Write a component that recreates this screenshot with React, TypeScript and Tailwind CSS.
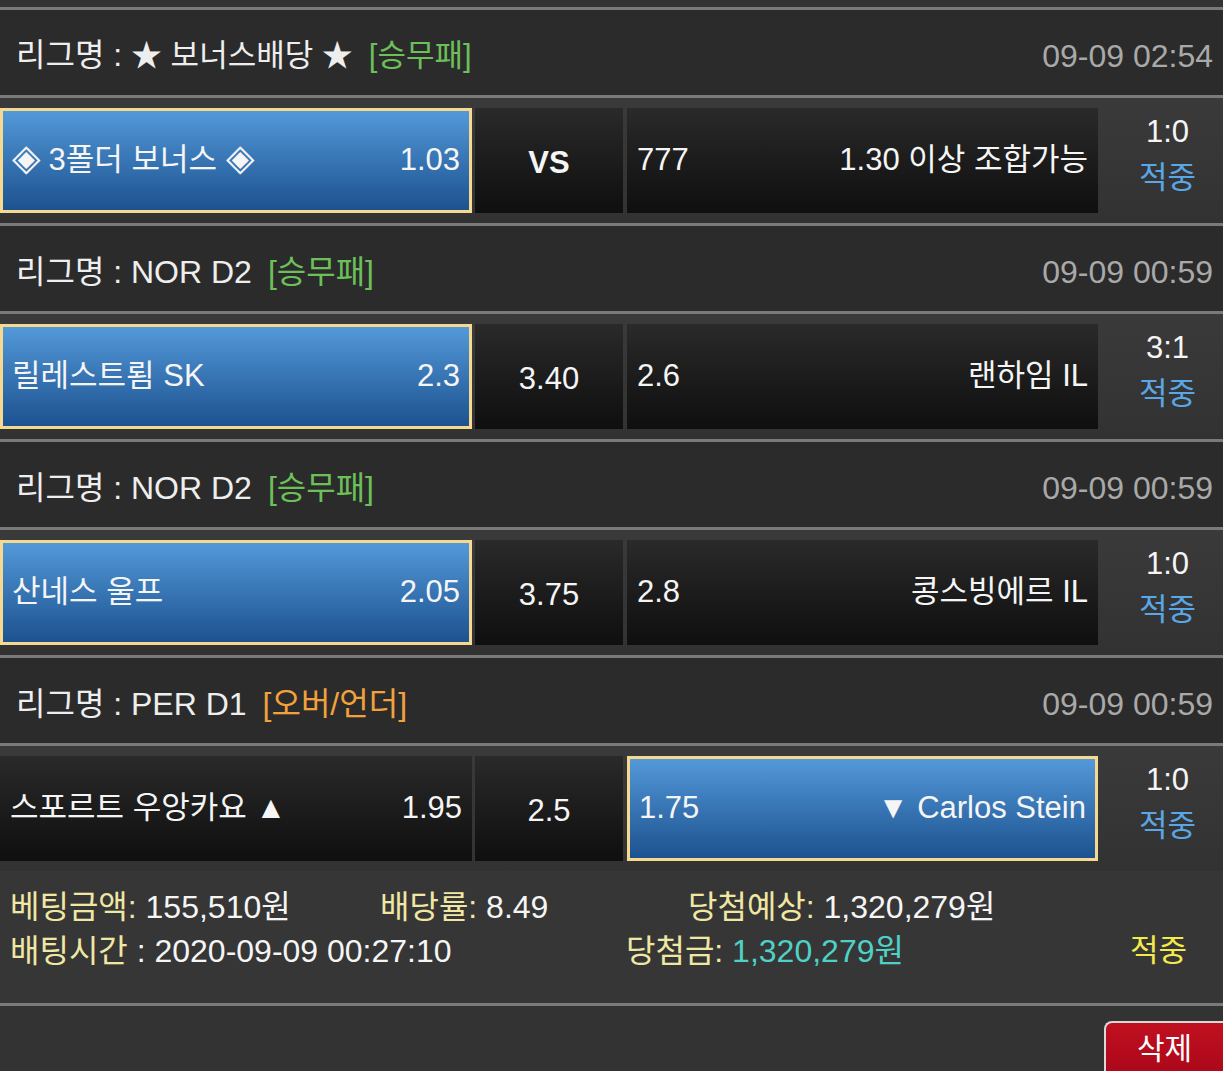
import React from "react";

type Pick = "home" | "away";

type Match = {
  league: string;
  leagueSize?: string;
  market: string;
  marketColor: string;
  time: string;
  home: string;
  homeOdd: string;
  mid: string;
  midBold?: boolean;
  awayOdd: string;
  away: string;
  pick: Pick;
  score: string;
};

const MATCHES: Match[] = [
  {
    league: "★ 보너스배당 ★",
    leagueSize: "text-[31px]",
    market: "[승무패]",
    marketColor: "text-[#6cc05a]",
    time: "09-09 02:54",
    home: "◈ 3폴더 보너스 ◈",
    homeOdd: "1.03",
    mid: "VS",
    midBold: true,
    awayOdd: "777",
    away: "1.30 이상 조합가능",
    pick: "home",
    score: "1:0",
  },
  {
    league: "NOR D2",
    market: "[승무패]",
    marketColor: "text-[#6cc05a]",
    time: "09-09 00:59",
    home: "릴레스트룀 SK",
    homeOdd: "2.3",
    mid: "3.40",
    awayOdd: "2.6",
    away: "랜하임 IL",
    pick: "home",
    score: "3:1",
  },
  {
    league: "NOR D2",
    market: "[승무패]",
    marketColor: "text-[#6cc05a]",
    time: "09-09 00:59",
    home: "산네스 울프",
    homeOdd: "2.05",
    mid: "3.75",
    awayOdd: "2.8",
    away: "콩스빙에르 IL",
    pick: "home",
    score: "1:0",
  },
  {
    league: "PER D1",
    market: "[오버/언더]",
    marketColor: "text-[#f2a23c]",
    time: "09-09 00:59",
    home: "스포르트 우앙카요 ▲",
    homeOdd: "1.95",
    mid: "2.5",
    awayOdd: "1.75",
    away: "▼ Carlos Stein",
    pick: "away",
    score: "1:0",
  },
];

const FONT = { fontFamily: '"Liberation Sans", "Noto Sans CJK KR", sans-serif' };

const selectedCell =
  "bg-gradient-to-b from-[#5399d9] to-[#1d5290] border-[3px] border-[#f5d98e] px-[9px]";
const darkCell = "bg-gradient-to-b from-[#2a2a2a] to-[#0f0f0f] px-[10px]";

function Line() {
  return <div className="h-[3px] bg-[#7a7a7a]" />;
}

// the bonus row uses bigger diamond marks
function CellLabel({ text }: { text: string }) {
  const parts = text.split("◈");
  if (parts.length === 1) return <span>{text}</span>;
  return (
    <span>
      {parts.map((p, i) => (
        <React.Fragment key={i}>
          {i > 0 && <span className="text-[37px] leading-none">◈</span>}
          {p}
        </React.Fragment>
      ))}
    </span>
  );
}

function MatchBlock({ m }: { m: Match }) {
  return (
    <>
      {/* League header */}
      <div className="h-[85px] bg-[#2b2b2b] flex items-center justify-between pl-4 pr-[10px] pt-[6px] text-[32px]">
        <div className="text-[#eeeeee]">
          리그명 : <span className={m.leagueSize ?? ""}>{m.league}</span>
          <span className={`ml-4 ${m.leagueSize ?? ""} ${m.marketColor}`}>{m.market}</span>
        </div>
        <div className="text-[#a9a9a9]">{m.time}</div>
      </div>
      <Line />

      {/* Odds row */}
      <div className="h-[125px] bg-gradient-to-b from-[#3a3a3a] to-[#323232] flex items-center">
        <div
          className={`w-[472px] h-[105px] flex items-center justify-between text-[31px] text-[#f5f5f5] ${
            m.pick === "home" ? selectedCell : darkCell
          }`}
        >
          <CellLabel text={m.home} />
          <span>{m.homeOdd}</span>
        </div>
        <div
          className={`ml-[3px] w-[148px] h-[105px] flex items-center justify-center pt-[5px] text-[31px] text-[#f5f5f5] ${darkCell} ${
            m.midBold ? "font-bold" : ""
          }`}
        >
          {m.mid}
        </div>
        <div
          className={`ml-[4px] w-[471px] h-[105px] flex items-center justify-between text-[31px] text-[#f5f5f5] ${
            m.pick === "away" ? selectedCell : darkCell
          }`}
        >
          <span>{m.awayOdd}</span>
          <span>{m.away}</span>
        </div>
        <div className="flex-1 h-[105px] flex flex-col items-center justify-center pl-[14px] pb-[12px] text-[31px] leading-[46px]">
          <span className="text-[#f5f5f5]">{m.score}</span>
          <span className="text-[#5aa7e8]">적중</span>
        </div>
      </div>
    </>
  );
}

export default function App() {
  return (
    <div className="w-[1223px] h-[1071px] overflow-hidden bg-[#333333]" style={FONT}>
      <div className="h-[7px] bg-[#333333]" />
      <Line />

      {MATCHES.map((m, i) => (
        <React.Fragment key={i}>
          <MatchBlock m={m} />
          {i < MATCHES.length - 1 && <Line />}
        </React.Fragment>
      ))}

      {/* Bet summary */}
      <div className="h-[132px] bg-[#363636] pl-[10px] pt-[14px] text-[32px] leading-[44px]">
        <div className="flex">
          <div className="w-[370px]">
            <span className="text-[#f0e7a4]">베팅금액:</span>
            <span className="text-[#f5f5f5]"> 155,510원</span>
          </div>
          <div className="w-[308px]">
            <span className="text-[#f0e7a4]">배당률:</span>
            <span className="text-[#f5f5f5]"> 8.49</span>
          </div>
          <div>
            <span className="text-[#f0e7a4]">당첨예상:</span>
            <span className="text-[#f5f5f5]"> 1,320,279원</span>
          </div>
        </div>
        <div className="flex">
          <div className="w-[616px]">
            <span className="text-[#f0e7a4]">배팅시간</span>
            <span className="text-[#f5f5f5]"> : 2020-09-09 00:27:10</span>
          </div>
          <div className="w-[504px]">
            <span className="text-[#f0e7a4]">당첨금:</span>
            <span className="text-[#4fd1c7]"> 1,320,279원</span>
          </div>
          <div className="text-[#f3ea4c] text-[31px]">적중</div>
        </div>
      </div>
      <Line />

      {/* Actions */}
      <div className="flex justify-end pt-[15px]">
        <button className="w-[119px] h-[60px] rounded-tl-lg border-2 border-r-0 border-b-0 border-[#d9d9d9] bg-gradient-to-b from-[#c0101f] to-[#a8061a] text-white text-[30px] leading-[44px] flex justify-center pt-[4px]">
          삭제
        </button>
      </div>
    </div>
  );
}
